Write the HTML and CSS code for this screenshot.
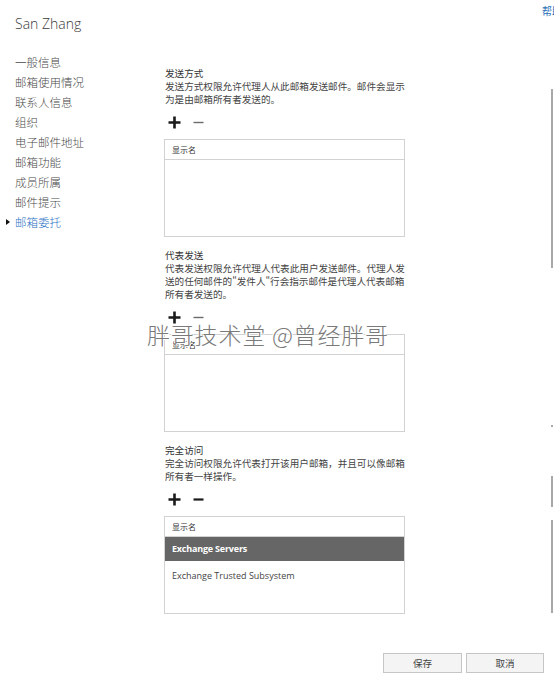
FILE: index.html
```html
<!DOCTYPE html>
<html lang="zh-CN">
<head>
<meta charset="utf-8">
<title>San Zhang</title>
<link rel="stylesheet" href="styles.css">
</head>
<body>
<div class="page">
  <div class="help">帮助</div>
  <div class="edge">
    <span class="edge-line l1"></span>
    <span class="edge-line l2"></span>
    <span class="edge-line l3"></span>
    <span class="edge-line l4"></span>
  </div>
  <h1 class="title">San Zhang</h1>
  <div class="layout">
    <nav class="nav">
      <a class="nav-item">一般信息</a>
      <a class="nav-item">邮箱使用情况</a>
      <a class="nav-item">联系人信息</a>
      <a class="nav-item">组织</a>
      <a class="nav-item">电子邮件地址</a>
      <a class="nav-item">邮箱功能</a>
      <a class="nav-item">成员所属</a>
      <a class="nav-item">邮件提示</a>
      <a class="nav-item active">邮箱委托</a>
    </nav>
    <main class="main">
      <section class="section">
        <div class="sec-title">发送方式</div>
        <div class="sec-desc">发送方式权限允许代理人从此邮箱发送邮件。邮件会显示<br>为是由邮箱所有者发送的。</div>
        <div class="toolbar">
          <svg class="ico plus" viewBox="0 0 13 13"><path d="M6.5 0.5v12M0.5 6.5h12"/></svg>
          <svg class="ico minus dim" viewBox="0 0 11 13"><path d="M0.5 6.5h10"/></svg>
        </div>
        <div class="list">
          <div class="list-head">显示名</div>
        </div>
      </section>
      <section class="section">
        <div class="sec-title">代表发送</div>
        <div class="sec-desc">代表发送权限允许代理人代表此用户发送邮件。代理人发<br>送的任何邮件的"发件人"行会指示邮件是代理人代表邮箱<br>所有者发送的。</div>
        <div class="toolbar">
          <svg class="ico plus" viewBox="0 0 13 13"><path d="M6.5 0.5v12M0.5 6.5h12"/></svg>
          <svg class="ico minus dim" viewBox="0 0 11 13"><path d="M0.5 6.5h10"/></svg>
        </div>
        <div class="list">
          <div class="list-head">显示名</div>
        </div>
        <div class="watermark">胖哥技术堂 @曾经胖哥</div>
      </section>
      <section class="section">
        <div class="sec-title">完全访问</div>
        <div class="sec-desc">完全访问权限允许代表打开该用户邮箱，并且可以像邮箱<br>所有者一样操作。</div>
        <div class="toolbar">
          <svg class="ico plus" viewBox="0 0 13 13"><path d="M6.5 0.5v12M0.5 6.5h12"/></svg>
          <svg class="ico minus" viewBox="0 0 11 13"><path d="M0.5 6.5h10"/></svg>
        </div>
        <div class="list">
          <div class="list-head">显示名</div>
          <div class="list-row selected">Exchange Servers</div>
          <div class="list-row">Exchange Trusted Subsystem</div>
        </div>
      </section>
    </main>
  </div>
  <footer class="actions">
    <button class="btn">保存</button>
    <button class="btn">取消</button>
  </footer>
</div>
</body>
</html>
```

FILE: styles.css
```css
html, body {
  margin: 0;
  padding: 0;
  background: #ffffff;
}
body {
  font-family: "Open Sans", "Noto Sans CJK SC", sans-serif;
  color: #333333;
  width: 554px;
  height: 679px;
  overflow: hidden;
}
.page {
  position: relative;
  width: 554px;
  height: 679px;
  overflow: hidden;
}
.help {
  position: absolute;
  left: 542px;
  top: 4px;
  font-family: "Noto Sans CJK SC", sans-serif;
  font-size: 10px;
  line-height: 14px;
  color: #2a6fb8;
  white-space: nowrap;
}
.edge {
  position: absolute;
  left: 551px;
  top: 0;
  width: 3px;
  height: 679px;
}
.edge-line {
  position: absolute;
  left: 0;
  width: 2px;
  background: #a8a8a8;
}
.l1 { top: 89px; height: 179px; }
.l2 { top: 425px; height: 2px; }
.l3 { top: 476px; height: 31px; }
.l4 { top: 520px; height: 93px; }

.title {
  margin: 0;
  padding: 15px 0 0 15px;
  height: 37px;
  box-sizing: border-box;
  font-weight: 300;
  font-size: 14px;
  line-height: 18px;
  color: #3a3a3a;
}
.layout {
  display: flex;
  margin-top: 15px;
}
.nav {
  width: 164px;
  flex: none;
  display: flex;
  flex-direction: column;
}
.nav-item {
  position: relative;
  padding-left: 15px;
  font-family: "Noto Sans CJK SC", sans-serif;
  font-size: 11.5px;
  line-height: 20px;
  height: 20px;
  color: #4a4a4a;
  font-weight: 300;
}
.nav-item.active {
  color: #1f72c4;
}
.nav-item.active::before {
  content: "";
  position: absolute;
  left: 6px;
  top: 7px;
  border-left: 4px solid #111;
  border-top: 3px solid transparent;
  border-bottom: 3px solid transparent;
}
.main {
  width: 241px;
  padding-top: 14px;
  display: flex;
  flex-direction: column;
  gap: 11px;
}
.section {
  position: relative;
  display: flex;
  flex-direction: column;
}
.sec-title {
  font-family: "Noto Sans CJK SC", sans-serif;
  font-size: 9.6px;
  line-height: 14px;
  color: #333;
  padding-left: 1px;
}
.sec-desc {
  font-family: "Noto Sans CJK SC", sans-serif;
  font-size: 9.6px;
  line-height: 13px;
  color: #444;
  white-space: nowrap;
  padding-left: 1px;
}
.toolbar {
  display: flex;
  align-items: center;
  gap: 12px;
  height: 14px;
  margin-top: 9px;
  padding-left: 4px;
}
.ico {
  display: block;
  height: 13px;
  fill: none;
  stroke-linecap: butt;
}
.plus {
  width: 13px;
  stroke: #1a1a1a;
  stroke-width: 2.6;
}
.minus {
  width: 11px;
  stroke: #1a1a1a;
  stroke-width: 2.2;
}
.minus.dim {
  stroke: #6a6a6a;
  stroke-width: 1.4;
}
.list {
  margin-top: 10px;
  height: 98px;
  box-sizing: border-box;
  border: 1px solid #d2d2d2;
  display: flex;
  flex-direction: column;
}
.list-head {
  height: 20px;
  box-sizing: border-box;
  border-bottom: 1px solid #d2d2d2;
  padding-left: 7px;
  font-family: "Noto Sans CJK SC", sans-serif;
  font-size: 8px;
  line-height: 19px;
  color: #333;
}
.list-row {
  height: 24px;
  padding-left: 7px;
  font-family: "Open Sans", sans-serif;
  font-size: 9px;
  line-height: 30px;
  color: #444;
}
.list-row.selected {
  background: #666666;
  color: #ffffff;
  font-weight: 700;
  line-height: 24px;
  font-size: 9px;
  letter-spacing: -0.2px;
}
.watermark {
  position: absolute;
  left: -17px;
  top: 72px;
  font-family: "Noto Sans CJK SC", sans-serif;
  font-size: 23px;
  letter-spacing: 0.8px;
  line-height: 28px;
  font-weight: 300;
  color: #7a7a7a;
  white-space: nowrap;
  text-shadow: 0 0 1px #fff, 1px 1px 0 #fff, -1px -1px 0 #fff;
}
.actions {
  position: absolute;
  right: 10px;
  bottom: 6px;
  display: flex;
  gap: 4px;
}
.btn {
  width: 79px;
  height: 20px;
  box-sizing: border-box;
  border: 1px solid #c6c6c6;
  background: #f4f4f4;
  font-family: "Noto Sans CJK SC", sans-serif;
  font-size: 9.6px;
  color: #444;
  padding: 0;
  line-height: 18px;
}
.btn + .btn {
  width: 78px;
}
```
